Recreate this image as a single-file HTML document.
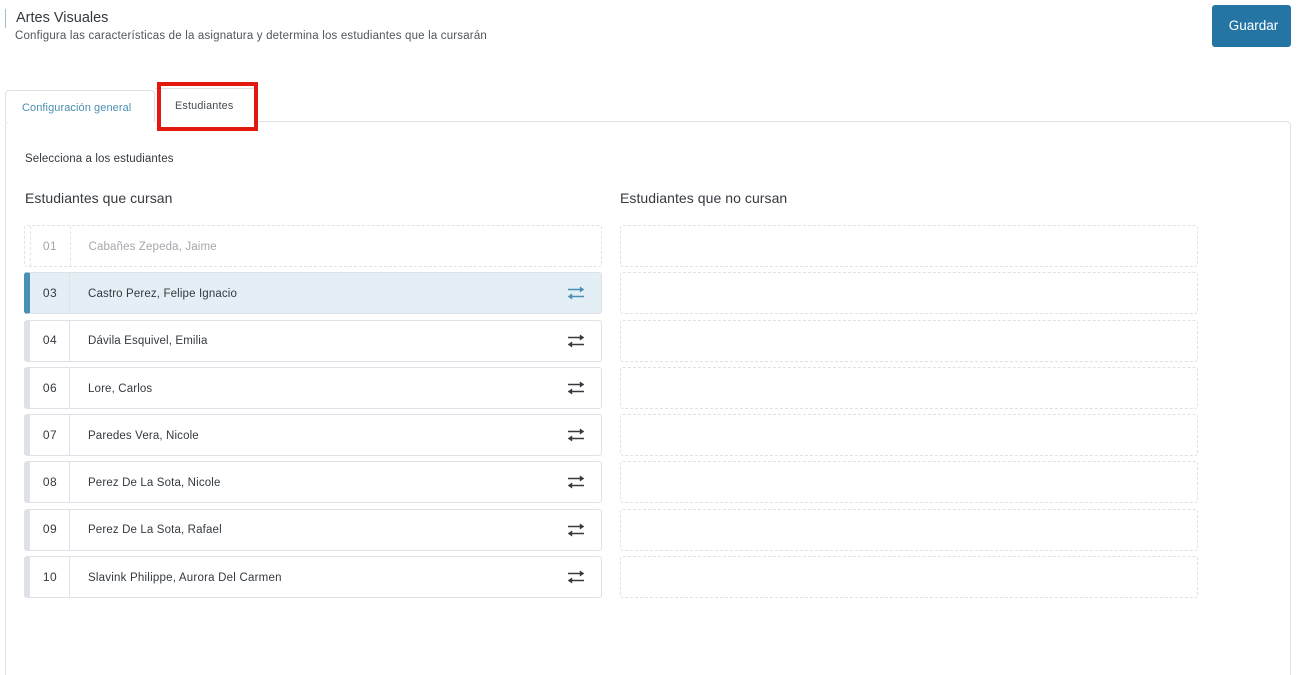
<!DOCTYPE html>
<html lang="es">
<head>
<meta charset="utf-8">
<title>Artes Visuales</title>
<style>
html,body{margin:0;padding:0;background:#fff;width:1298px;height:675px;overflow:hidden}
#w{position:relative;width:1298px;height:675px;overflow:hidden;font-family:"Liberation Sans",sans-serif;color:#343a40;background:#fff}
.a{position:absolute;white-space:nowrap}
.panel{position:absolute;left:5px;top:121px;width:1286px;height:570px;border:1px solid #dfe1e8;border-radius:4px;box-sizing:border-box}
.tab1{position:absolute;left:5px;top:90px;width:150px;height:32px;border:1px solid #dfe1e8;border-bottom:none;border-radius:4px 4px 0 0;box-sizing:border-box;background:#fff}
.tab2{position:absolute;left:155px;top:88px;width:100px;height:35px;background:#fff;border-top:1px solid #dfe1e8;box-sizing:border-box}
.red{position:absolute;left:157px;top:82px;width:101px;height:49px;border:4px solid #e3190f;box-sizing:border-box}
.row{position:absolute;left:24px;width:578px;height:42px;border:1px solid #dfe1e8;border-left:6px solid #dfe1e8;border-radius:3px;box-sizing:border-box;background:#fff}
.row.sel{background:#e3eef5;border-left-color:#4a90b5}
.row .d{position:absolute;left:39px;top:0;bottom:0;width:1px;background:#dfe1e8}
.row .n{position:absolute;left:0;width:40px;top:0;line-height:40px;text-align:center;font-size:12px;letter-spacing:.4px;color:#343a40}
.row .t{position:absolute;left:58px;top:1px;line-height:40px;font-size:11.5px;letter-spacing:.14px;white-space:nowrap;color:#343a40}
.row.up .t{top:0}
.row.up .n{top:-1px}
.row svg{position:absolute;left:536px;top:12px}
.ghost{position:absolute;width:578px;height:42px;border:1px dashed #dfe1e8;border-radius:3px;box-sizing:border-box;background:#fff}
.ghost .d{position:absolute;left:45px;top:0;bottom:0;border-left:1px dashed #dfe1e8}
.ghost .l{position:absolute;left:5px;top:0;bottom:0;border-left:1px dashed #dfe1e8}
.ghost .n{position:absolute;left:5px;width:40px;line-height:40px;text-align:center;font-size:12px;letter-spacing:.4px;color:#a3a7ab}
.ghost .t{position:absolute;left:63.5px;top:1px;line-height:40px;font-size:11.5px;letter-spacing:.14px;white-space:nowrap;color:#a3a7ab}
</style>
</head>
<body>
<div id="w">
<div class="a" style="left:5px;top:9px;width:1px;height:19px;background:#9dbccd"></div>
<div class="a" style="left:16px;top:10px;font-size:14.5px;line-height:17px;color:#343a40">Artes Visuales</div>
<div class="a" style="left:15px;top:29px;font-size:11.5px;line-height:14px;color:#50565c;letter-spacing:.18px">Configura las características de la asignatura y determina los estudiantes que la cursarán</div>
<div class="a" style="left:1212px;top:5px;width:79px;height:42px;box-sizing:border-box;padding-left:4px;background:#2575a4;border-radius:3px;color:#fff;font-size:13.5px;line-height:42px;text-align:center">Guardar</div>

<div class="panel"></div>
<div class="tab1"></div>
<div class="tab2"></div>
<div class="a" style="left:22px;top:101px;font-size:11px;letter-spacing:.08px;line-height:14px;color:#4a90b5">Configuración general</div>
<div class="a" style="left:175px;top:99px;font-size:10.8px;letter-spacing:.18px;line-height:14px;color:#454b50">Estudiantes</div>
<div class="red"></div>

<div class="a" style="left:25px;top:152px;font-size:11.5px;letter-spacing:.1px;line-height:14px;color:#343a40">Selecciona a los estudiantes</div>
<div class="a" style="left:25px;top:190px;font-size:14px;letter-spacing:.05px;line-height:17px;color:#343a40">Estudiantes que cursan</div>
<div class="a" style="left:620px;top:190px;font-size:14px;letter-spacing:.06px;line-height:17px;color:#343a40">Estudiantes que no cursan</div>

<div class="ghost" style="left:24px;top:225px"><div class="l"></div><div class="d"></div><div class="n">01</div><div class="t">Cabañes Zepeda, Jaime</div></div>

<div class="row sel" style="top:272px"><div class="d"></div><div class="n">03</div><div class="t">Castro Perez, Felipe Ignacio</div><svg width="20" height="16" viewBox="0 0 20 16" fill="#4a90b5" stroke="#4a90b5" stroke-width="1.5"><path d="M2 4.5H16" fill="none"/><path d="M14 1.8L18 4.5L14 7.2Z" stroke-width=".4"/><path d="M18 11.5H4" fill="none"/><path d="M6 8.8L2 11.5L6 14.2Z" stroke-width=".4"/></svg></div>
<div class="row up" style="top:320px"><div class="d"></div><div class="n">04</div><div class="t">Dávila Esquivel, Emilia</div><svg width="20" height="16" viewBox="0 0 20 16" fill="#343a40" stroke="#343a40" stroke-width="1.5"><path d="M2 4.5H16" fill="none"/><path d="M14 1.8L18 4.5L14 7.2Z" stroke-width=".4"/><path d="M18 11.5H4" fill="none"/><path d="M6 8.8L2 11.5L6 14.2Z" stroke-width=".4"/></svg></div>
<div class="row" style="top:367px"><div class="d"></div><div class="n">06</div><div class="t">Lore, Carlos</div><svg width="20" height="16" viewBox="0 0 20 16" fill="#343a40" stroke="#343a40" stroke-width="1.5"><path d="M2 4.5H16" fill="none"/><path d="M14 1.8L18 4.5L14 7.2Z" stroke-width=".4"/><path d="M18 11.5H4" fill="none"/><path d="M6 8.8L2 11.5L6 14.2Z" stroke-width=".4"/></svg></div>
<div class="row" style="top:414px"><div class="d"></div><div class="n">07</div><div class="t">Paredes Vera, Nicole</div><svg width="20" height="16" viewBox="0 0 20 16" fill="#343a40" stroke="#343a40" stroke-width="1.5"><path d="M2 4.5H16" fill="none"/><path d="M14 1.8L18 4.5L14 7.2Z" stroke-width=".4"/><path d="M18 11.5H4" fill="none"/><path d="M6 8.8L2 11.5L6 14.2Z" stroke-width=".4"/></svg></div>
<div class="row" style="top:461px"><div class="d"></div><div class="n">08</div><div class="t">Perez De La Sota, Nicole</div><svg width="20" height="16" viewBox="0 0 20 16" fill="#343a40" stroke="#343a40" stroke-width="1.5"><path d="M2 4.5H16" fill="none"/><path d="M14 1.8L18 4.5L14 7.2Z" stroke-width=".4"/><path d="M18 11.5H4" fill="none"/><path d="M6 8.8L2 11.5L6 14.2Z" stroke-width=".4"/></svg></div>
<div class="row up" style="top:509px"><div class="d"></div><div class="n">09</div><div class="t">Perez De La Sota, Rafael</div><svg width="20" height="16" viewBox="0 0 20 16" fill="#343a40" stroke="#343a40" stroke-width="1.5"><path d="M2 4.5H16" fill="none"/><path d="M14 1.8L18 4.5L14 7.2Z" stroke-width=".4"/><path d="M18 11.5H4" fill="none"/><path d="M6 8.8L2 11.5L6 14.2Z" stroke-width=".4"/></svg></div>
<div class="row" style="top:556px"><div class="d"></div><div class="n">10</div><div class="t" style="letter-spacing:.22px">Slavink Philippe, Aurora Del Carmen</div><svg width="20" height="16" viewBox="0 0 20 16" fill="#343a40" stroke="#343a40" stroke-width="1.5"><path d="M2 4.5H16" fill="none"/><path d="M14 1.8L18 4.5L14 7.2Z" stroke-width=".4"/><path d="M18 11.5H4" fill="none"/><path d="M6 8.8L2 11.5L6 14.2Z" stroke-width=".4"/></svg></div>

<div class="ghost" style="left:620px;top:225px"></div>
<div class="ghost" style="left:620px;top:272px"></div>
<div class="ghost" style="left:620px;top:320px"></div>
<div class="ghost" style="left:620px;top:367px"></div>
<div class="ghost" style="left:620px;top:414px"></div>
<div class="ghost" style="left:620px;top:461px"></div>
<div class="ghost" style="left:620px;top:509px"></div>
<div class="ghost" style="left:620px;top:556px"></div>
</div>
</body>
</html>
